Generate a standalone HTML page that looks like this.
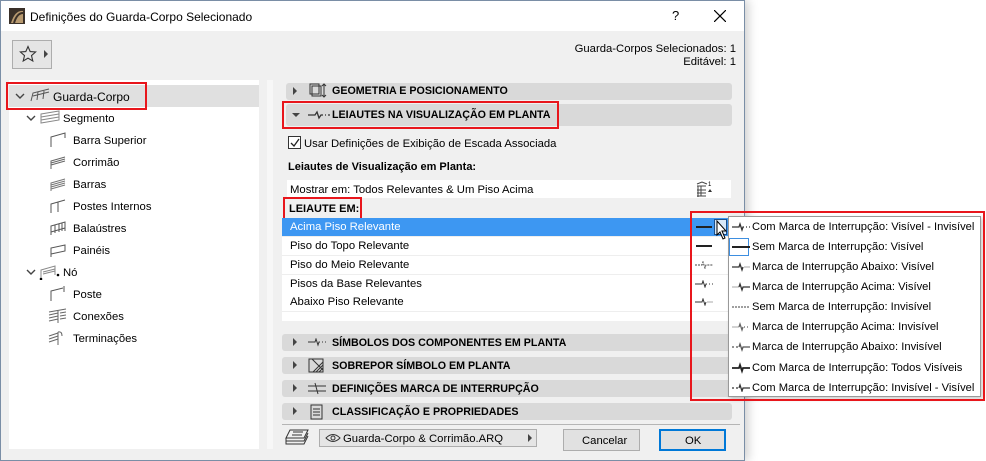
<!DOCTYPE html>
<html><head><meta charset="utf-8"><style>
*{box-sizing:border-box;margin:0;padding:0}
body{width:986px;height:461px;background:#fff;font-family:"Liberation Sans",sans-serif;font-size:11.3px;color:#000;position:relative;overflow:hidden}
.a{position:absolute}
.t{position:absolute;white-space:nowrap;line-height:14px;padding-top:1px}
.hdr{position:absolute;background:#d9d9d9;border-radius:3px;font-weight:bold;font-size:10.7px}
.hdr span{position:absolute;top:3px;white-space:nowrap}
.tri{position:absolute;width:0;height:0;border-top:4px solid transparent;border-bottom:4px solid transparent;border-left:4px solid #444}
.red{position:absolute;border:2px solid #e8161c}
.row{position:absolute;left:282px;width:458px;height:19px;background:#fff;border-bottom:1px solid #eee}
.row span{position:absolute;left:8px;top:3px}
.pi{position:absolute;left:752px;white-space:nowrap;font-size:11.2px;padding-top:1px}
</style></head><body>
<div class="a" style="left:0;top:0;width:745px;height:461px;background:#f0f0f0;border:1px solid #7a8ea6;box-shadow:3px 0 10px rgba(0,0,0,.2)"></div>
<div class="a" style="left:1px;top:1px;width:743px;height:30px;background:#fff"></div>
<svg class="a" style="left:9px;top:8px" width="16" height="16"><rect width="16" height="16" fill="#3a3028"/><path d="M2 15 Q6 2 14 3 L14 15 Z" fill="#b89a70"/><path d="M5 15 Q8 5 14 5" stroke="#3a3028" stroke-width="2" fill="none"/></svg>
<div class="t" style="left:30px;top:9px;font-size:12px">Definições do Guarda-Corpo Selecionado</div>
<div class="t" style="left:672px;top:8px;font-size:13px">?</div>
<svg class="a" style="left:714px;top:10px" width="12" height="12"><path d="M0 0L12 12M12 0L0 12" stroke="#000" stroke-width="1.2"/></svg>
<div class="a" style="left:12px;top:40px;width:40px;height:29px;border:1px solid #adadad;background:#e5e5e5"></div>
<svg class="a" style="left:19px;top:45px" width="18" height="18"><path d="M9 1.5L11.2 6.6 16.6 7 12.5 10.6 13.8 16 9 13.1 4.2 16 5.5 10.6 1.4 7 6.8 6.6Z" fill="none" stroke="#333" stroke-width="1.1"/></svg>
<div class="tri" style="left:44px;top:50px"></div>
<div class="t" style="right:250px;top:41px">Guarda-Corpos Selecionados: 1</div>
<div class="t" style="right:250px;top:54px">Editável: 1</div>
<div class="a" style="left:9px;top:80px;width:250px;height:369px;background:#fff"></div>
<div class="a" style="left:9px;top:85px;width:250px;height:22px;background:#e0e0e0"></div>
<div class="red" style="left:6px;top:82px;width:141px;height:28px"></div>
<svg class="a" style="left:15px;top:93px" width="10" height="7"><path d="M1 1L5 5 9 1" stroke="#444" stroke-width="1.4" fill="none"/></svg>
<svg class="a" style="left:30px;top:88px" width="20" height="14"><path d="M1 13L3 5 19 1M3 8L19 4M8 4L7 12M14 3L13 11" stroke="#555" fill="none"/></svg>
<div class="t" style="left:53px;top:89px;font-size:12px">Guarda-Corpo</div>
<svg class="a" style="left:26px;top:115px" width="10" height="7"><path d="M1 1L5 5 9 1" stroke="#444" stroke-width="1.4" fill="none"/></svg>
<svg class="a" style="left:40px;top:110px" width="20" height="14"><path d="M1 4L19 1 19 10 1 13Z M1 7L19 4M1 10L19 7" stroke="#888" fill="none"/></svg>
<div class="t" style="left:63px;top:111px">Segmento</div>
<svg class="a" style="left:50px;top:132px" width="16" height="16"><path d="M1 15L1 5 15 1 15 6" stroke="#555" fill="none"/></svg>
<div class="t" style="left:73px;top:133px">Barra Superior</div>
<svg class="a" style="left:50px;top:154px" width="16" height="16"><path d="M1 15L1 7 15 3M1 9L15 5M1 11L15 7" stroke="#666" fill="none"/></svg>
<div class="t" style="left:73px;top:155px">Corrimão</div>
<svg class="a" style="left:50px;top:176px" width="16" height="16"><path d="M1 15L1 7 15 3M1 9L15 5M1 11L15 7M1 13L15 9" stroke="#777" fill="none"/></svg>
<div class="t" style="left:73px;top:177px">Barras</div>
<svg class="a" style="left:50px;top:198px" width="16" height="16"><path d="M1 15L1 6 15 2M8 4L8 14" stroke="#555" fill="none"/></svg>
<div class="t" style="left:73px;top:199px">Postes Internos</div>
<svg class="a" style="left:50px;top:220px" width="16" height="16"><path d="M1 15L1 6 15 2 15 11M1 12L15 8M5 5L5 13M9 4L9 12M12 3L12 11" stroke="#555" fill="none"/></svg>
<div class="t" style="left:73px;top:221px">Balaústres</div>
<svg class="a" style="left:50px;top:242px" width="16" height="16"><path d="M1 15L1 6 15 3 15 9 1 12" stroke="#555" fill="none"/></svg>
<div class="t" style="left:73px;top:243px">Painéis</div>
<svg class="a" style="left:26px;top:269px" width="10" height="7"><path d="M1 1L5 5 9 1" stroke="#444" stroke-width="1.4" fill="none"/></svg>
<svg class="a" style="left:39px;top:264px" width="22" height="16"><path d="M2 15L2 6 16 2 16 11M4 8L16 5M4 10L16 7" stroke="#888" fill="none"/><circle cx="2" cy="15" r="1.3"/><circle cx="19" cy="11" r="1.3"/></svg>
<div class="t" style="left:63px;top:265px">Nó</div>
<svg class="a" style="left:50px;top:286px" width="16" height="16"><path d="M1 15L1 5 13 2M14 0L14 6" stroke="#555" fill="none"/></svg>
<div class="t" style="left:73px;top:287px">Poste</div>
<svg class="a" style="left:48px;top:308px" width="20" height="16"><path d="M1 4L18 1M1 7L10 5M1 10L10 8M1 13L10 11M10 3L10 15M12 5L18 4M12 8L18 7M12 11L18 10" stroke="#666" fill="none"/></svg>
<div class="t" style="left:73px;top:309px">Conexões</div>
<svg class="a" style="left:48px;top:330px" width="18" height="16"><path d="M1 6L10 3M1 9L10 6M1 12L10 9M10 2L10 15M10 2 Q14 1 14 6" stroke="#666" fill="none"/></svg>
<div class="t" style="left:73px;top:331px">Terminações</div>
<div class="a" style="left:267px;top:80px;width:6px;height:369px;background:#f7f7f7"></div>
<div class="hdr" style="left:286px;top:83px;width:446px;height:17px"><div class="tri" style="left:7px;top:4px"></div>
<svg class="a" style="left:22px;top:0" width="20" height="16"><rect x="2" y="1" width="9" height="10" fill="none" stroke="#333"/><rect x="4" y="3" width="9" height="10" fill="none" stroke="#333"/><path d="M16 1L16 14M14 3L16 1 18 3M14 12L16 14 18 12" stroke="#333" fill="none"/></svg>
<span style="left:46px;top:2px">GEOMETRIA E POSICIONAMENTO</span></div>
<div class="hdr" style="left:286px;top:104px;width:446px;height:22px"><div class="a" style="left:6px;top:9px;border-left:4px solid transparent;border-right:4px solid transparent;border-top:4px solid #444;width:0;height:0"></div>
<svg class="a" style="left:22px;top:6px" width="22" height="10"><path d="M0 5H7L9 2 11 8 13 5H15M17 5H18M20 5H22" stroke="#333" stroke-width="1.3" fill="none"/></svg>
<span style="left:46px;top:5px">LEIAUTES NA VISUALIZAÇÃO EM PLANTA</span></div>
<div class="red" style="left:282px;top:101px;width:277px;height:28px"></div>
<div class="a" style="left:288px;top:136px;width:13px;height:13px;border:1px solid #333;background:#fff"></div>
<svg class="a" style="left:289px;top:137px" width="12" height="12"><path d="M2 6L5 9 10 2" stroke="#222" stroke-width="1.3" fill="none"/></svg>
<div class="t" style="left:304px;top:136px">Usar Definições de Exibição de Escada Associada</div>
<div class="t" style="left:288px;top:159px;font-weight:bold;font-size:11px">Leiautes de Visualização em Planta:</div>
<div class="a" style="left:287px;top:180px;width:444px;height:18px;background:#fff"></div>
<div class="t" style="left:290px;top:182px">Mostrar em: Todos Relevantes &amp; Um Piso Acima</div>
<svg class="a" style="left:695px;top:180px" width="18" height="18"><path d="M2 4L7 2 12 4M2 6H11M3 6V17M2 10H11M2 13H11M2 16H11M6 6V16" stroke="#444" fill="none"/><path d="M13 12L15 9 17 12Z" fill="#333"/><text x="13" y="6" font-size="6">1</text></svg>
<div class="t" style="left:289px;top:201px;font-weight:bold;font-size:11px">LEIAUTE EM:</div>
<div class="red" style="left:283px;top:197px;width:79px;height:23px"></div>
<div class="a" style="left:282px;top:218px;width:458px;height:103px;background:#fff"></div>
<div class="row" style="top:218px;background:#3d97f2;color:#fff"><span>Acima Piso Relevante</span></div>
<div class="row" style="top:237px"><span>Piso do Topo Relevante</span></div>
<div class="row" style="top:256px"><span>Piso do Meio Relevante</span></div>
<div class="row" style="top:275px"><span>Pisos da Base Relevantes</span></div>
<div class="row" style="top:293px"><span>Abaixo Piso Relevante</span></div>
<div class="a" style="left:696px;top:226px;width:16px;height:2px;background:#222"></div>
<div class="a" style="left:696px;top:245px;width:16px;height:2px;background:#222"></div>
<svg class="a" style="left:695px;top:261px" width="18" height="8"><path d="M0 4H7L8 1 10 7 11 4H18" stroke="#444" stroke-dasharray="2 1" fill="none"/></svg>
<svg class="a" style="left:695px;top:280px" width="18" height="8"><path d="M0 4H7L8 1 10 7 11 4H12M14 4H15M17 4H18" stroke="#333" fill="none"/></svg>
<svg class="a" style="left:695px;top:298px" width="18" height="8"><path d="M0 4H7L8 1 10 7 11 4" stroke="#333" fill="none"/><path d="M12 4H18" stroke="#aaa"/></svg>
<div class="a" style="left:714px;top:219px;width:13px;height:16px;border:1px solid #1c4f8a;background:#d8e8f8"></div>
<svg class="a" style="left:716px;top:220px" width="14" height="22"><path d="M1 1L1 15 4 12 7 19 9 18 6 11 10 11Z" fill="#fff" stroke="#000" stroke-width="1"/></svg>
<div class="hdr" style="left:282px;top:334px;width:450px;height:17px"><div class="tri" style="left:11px;top:4px"></div>
<svg class="a" style="left:26px;top:4px" width="20" height="9"><path d="M0 4H7L8 1 10 7 11 4H12M14 4H15M17 4H18" stroke="#333" fill="none"/></svg>
<span style="left:50px">SÍMBOLOS DOS COMPONENTES EM PLANTA</span></div>
<div class="hdr" style="left:282px;top:357px;width:450px;height:17px"><div class="tri" style="left:11px;top:4px"></div>
<svg class="a" style="left:26px;top:0" width="18" height="17"><rect x="1" y="2" width="14" height="13" fill="none" stroke="#333"/><path d="M5 15L15 5M8 15L15 8M11 15L15 11M4 2L15 13" stroke="#333" fill="none"/></svg>
<span style="left:50px">SOBREPOR SÍMBOLO EM PLANTA</span></div>
<div class="hdr" style="left:282px;top:380px;width:450px;height:17px"><div class="tri" style="left:11px;top:4px"></div>
<svg class="a" style="left:26px;top:2px" width="18" height="13"><path d="M0 4H18M0 9H18M7 1L10 12" stroke="#333" fill="none"/></svg>
<span style="left:50px">DEFINIÇÕES MARCA DE INTERRUPÇÃO</span></div>
<div class="hdr" style="left:282px;top:403px;width:450px;height:17px"><div class="tri" style="left:11px;top:4px"></div>
<svg class="a" style="left:28px;top:1px" width="14" height="16"><rect x="1" y="1" width="11" height="14" fill="none" stroke="#333"/><path d="M3 5H10M3 8H10M3 11H10" stroke="#333"/></svg>
<span style="left:50px">CLASSIFICAÇÃO E PROPRIEDADES</span></div>
<div class="a" style="left:282px;top:424px;width:458px;height:1px;background:#b5b5b5"></div>
<svg class="a" style="left:284px;top:428px" width="26" height="18"><path d="M6 2H24L20 10H2Z M2 10V13L20 13 24 5M2 13V16L20 16 24 8" stroke="#333" fill="none"/><path d="M9 4H19M8 7H18" stroke="#333"/></svg>
<div class="a" style="left:319px;top:429px;width:218px;height:18px;border:1px solid #adadad;background:#e5e5e5"></div>
<svg class="a" style="left:325px;top:433px" width="16" height="10"><path d="M1 5Q8 -2 15 5Q8 12 1 5Z" fill="none" stroke="#333"/><circle cx="8" cy="5" r="2" fill="none" stroke="#333"/></svg>
<div class="t" style="left:343px;top:431px">Guarda-Corpo &amp; Corrimão.ARQ</div>
<div class="tri" style="left:528px;top:434px"></div>
<div class="a" style="left:563px;top:429px;width:77px;height:22px;border:1px solid #adadad;background:#e1e1e1"></div>
<div class="t" style="left:582px;top:433px">Cancelar</div>
<div class="a" style="left:659px;top:429px;width:67px;height:22px;border:2px solid #0078d7;background:#e1e1e1"></div>
<div class="t" style="left:685px;top:433px">OK</div>
<div class="a" style="left:728px;top:216px;width:253px;height:181px;background:#fff;border:1px solid #999;box-shadow:2px 2px 4px rgba(0,0,0,.2)"></div>
<div class="a" style="left:729px;top:238px;width:20px;height:18px;border:1px solid #3d8ee0"></div>
<svg class="a" style="left:732px;top:222px" width="18" height="170" stroke-width="1.3" fill="none">
<path d="M0 5H7L8 2 10 8 11 5H12M14 5H15M17 5H18" stroke="#333"/>
<path d="M0 25H18" stroke="#222" stroke-width="2"/>
<path d="M0 45H7L8 42 10 48 11 45" stroke="#333"/><path d="M12 45H18" stroke="#bbb"/>
<path d="M0 65H7" stroke="#bbb"/><path d="M7 65L8 62 10 68 11 65H18" stroke="#333"/>
<path d="M0 85H18" stroke="#666" stroke-dasharray="2 1"/>
<path d="M0 105H7" stroke="#bbb"/><path d="M7 105L8 102 10 108 11 105" stroke="#666"/><path d="M12 105H13M15 105H16" stroke="#666"/>
<path d="M0 125H2M4 125H6M7 125L8 122 10 128 11 125H18" stroke="#555"/>
<path d="M0 146H7L8 143 10 149 11 146H18" stroke="#222" stroke-width="1.8"/>
<path d="M0 166H2M4 166H6M7 166L8 163 10 169 11 166H18" stroke="#333"/>
</svg>
<div class="pi" style="top:220px">Com Marca de Interrupção: Visível - Invisível</div>
<div class="pi" style="top:240px">Sem Marca de Interrupção: Visível</div>
<div class="pi" style="top:260px">Marca de Interrupção Abaixo: Visível</div>
<div class="pi" style="top:280px">Marca de Interrupção Acima: Visível</div>
<div class="pi" style="top:300px">Sem Marca de Interrupção: Invisível</div>
<div class="pi" style="top:320px">Marca de Interrupção Acima: Invisível</div>
<div class="pi" style="top:340px">Marca de Interrupção Abaixo: Invisível</div>
<div class="pi" style="top:361px">Com Marca de Interrupção: Todos Visíveis</div>
<div class="pi" style="top:381px">Com Marca de Interrupção: Invisível - Visível</div>
<div class="red" style="left:690px;top:211px;width:295px;height:190px"></div>
</body></html>
